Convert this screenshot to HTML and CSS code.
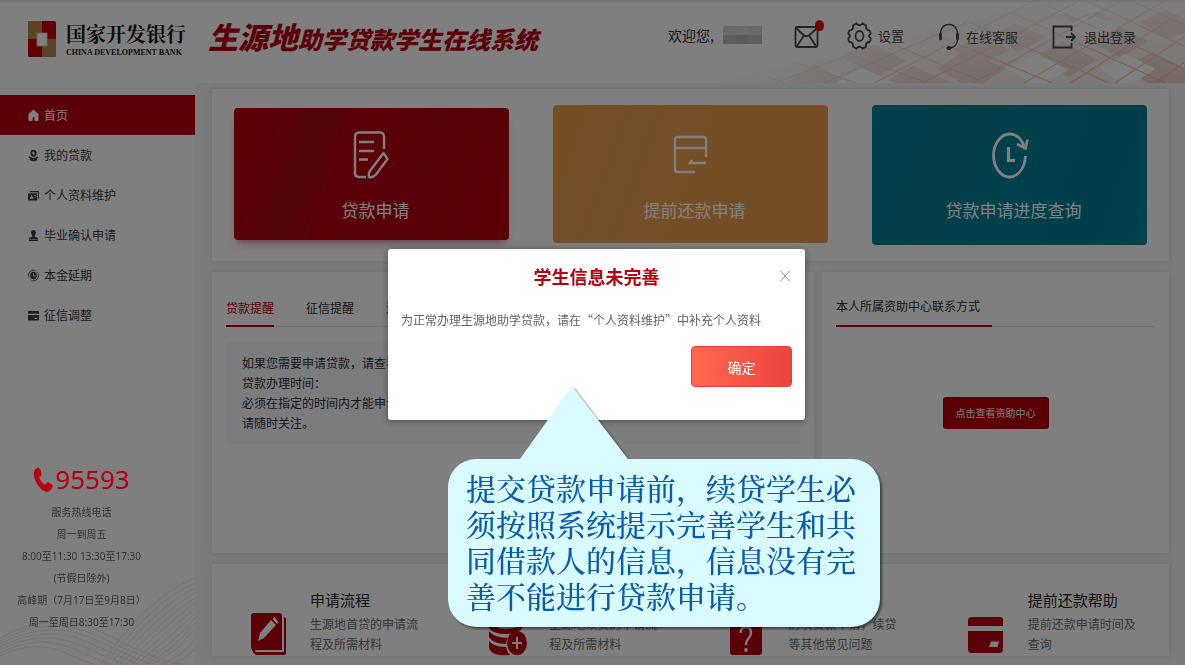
FILE: index.html
```html
<!DOCTYPE html>
<html lang="zh-CN">
<head>
<meta charset="utf-8">
<meta name="viewport" content="width=device-width, initial-scale=1">
<title>生源地助学贷款学生在线系统</title>
<link rel="stylesheet" href="styles.css">
</head>
<body>
<div class="page">
  <header class="header">
    <svg class="header-art" viewBox="0 0 465 80" preserveAspectRatio="xMaxYMid slice" aria-hidden="true">
      <defs>
        <linearGradient id="fade" x1="0" y1="0.4" x2="1" y2="0.6"><stop offset="0.05" stop-color="#000"/><stop offset="0.4" stop-color="#999"/><stop offset="1" stop-color="#fff"/></linearGradient>
        <linearGradient id="fadeDown" x1="0" y1="0" x2="0" y2="1"><stop offset="0" stop-color="#fff" stop-opacity="0.6"/><stop offset="1" stop-color="#fff" stop-opacity="0"/></linearGradient>
        <mask id="artMask"><rect width="465" height="80" fill="url(#fade)"/></mask>
      </defs>
      <g mask="url(#artMask)">
        <path d="M0 80L100 58L210 30L330 0H465V80Z" fill="#fbeeea"/>
        <g fill="#f0d0c7">
          <path d="M70 80l30-19 32 19zM130 56l28-14 32 16-30 16zM220 66l30-20 38 20-22 14h-22zM272 33l26-12 30 14-28 14zM316 56l28-17 34 18-28 17zM340 13l24-9 30 12-26 11zM370 38l27-15 32 16-28 16zM404 66l28-17 33 18v13h-36zM420 20l26-12 19 8v14l-18 6zM168 80l28-17 38 17zM236 47l28-14 28 14-28 15z"/>
        </g>
        <g fill="#fff"><path d="M120 80l26-15 32 15zM290 66l28-15 32 16-22 13h-16zM346 24l26-12 30 13-28 13zM380 66l26-15 30 15-22 14h-12zM330 8l22-8h10l20 8-24 8z"/></g>
        <g stroke="#eeb3a3" stroke-width="1" fill="none">
          <path d="M40 70l30 10M80 60l60 20M130 50l80 30M172 40l96 40M212 30l122 50M252 20l138 60M292 10l154 70M330 4l135 62M366 -2l99 46M402 -6l63 29"/>
          <path d="M60 80L150 46M108 80L250 20M158 80L325 -6M206 80L370 -6M256 80L410 -6M306 80L450 -4M352 80L465 8M396 80L465 34M436 80L465 59"/>
        </g>
      </g>
      <rect width="465" height="80" fill="url(#fadeDown)"/>
    </svg>
    <div class="brand">
      <svg class="brand-mark" viewBox="0 0 28 36" aria-hidden="true"><rect width="28" height="36" rx="2" fill="#c00008"/><path d="M2 0H14V18H0V2Q0 0 2 0ZM14 18H28V34Q28 36 26 36H14Z" fill="#b5894a"/><path d="M9 12H19V25H9Z" fill="#fff" stroke="#e2bcae" stroke-width="1"/></svg>
      <div class="brand-name"><span class="brand-cn">国家开发银行</span><span class="brand-en">CHINA DEVELOPMENT BANK</span></div>
    </div>
    <h1 class="site-title"><span class="site-title-lead">生源地</span>助学贷款学生在线系统</h1>
    <div class="tools">
      <p class="welcome">欢迎您,<span class="name-mask"><i></i><i></i><i></i><i></i><i></i><i></i></span></p>
      <a class="tool mail" href="#" aria-label="消息">
        <svg width="26" height="24" viewBox="0 0 26 24" fill="none" stroke="currentColor" stroke-width="1.8"><rect x="1.5" y="2" width="22" height="20" rx="1.5"/><path d="M2.500 3.500l7 6.500q3 2.500 6 0l7-6.500M3 21l7-10.500M22 21l-7-10.500"/></svg>
        <span class="dot"></span>
      </a>
      <a class="tool settings" href="#"><svg width="25" height="28" viewBox="0 0 25 28" fill="none" stroke="currentColor" stroke-width="1.8"><path d="M9.500 1.500Q12.500 5 15.500 1.500L19 3.500Q18.500 8 22.500 8.500Q24 11 23.500 12Q20.500 14 23.500 16Q24 18 22.500 20Q18.500 20 19 24.500L15.500 26.500Q12.500 23 9.500 26.500L6 24.500Q6.500 20 2.500 20Q1 18 1.500 16Q4.500 14 1.500 12Q1 11 2.500 8.500Q6.500 8 6 3.500Z"/><ellipse cx="12.500" cy="14" rx="4" ry="5"/></svg>设置</a>
      <a class="tool service" href="#"><svg width="22" height="28" viewBox="0 0 22 28" fill="none" stroke="currentColor" stroke-width="1.3"><path d="M2.500 10C3 5 6 1.500 11 1.500S19 5 19.500 10M19.500 17Q19 24 12 25"/><path d="M2.500 11v5M19.500 11v5" stroke-width="2.800" stroke-linecap="round"/><ellipse cx="11" cy="25" rx="2" ry="1.300" fill="currentColor"/></svg>在线客服</a>
      <a class="tool logout" href="#"><svg width="24" height="24" viewBox="0 0 24 24" fill="none" stroke="currentColor" stroke-width="1.800"><path d="M19.500 6V1.500H1.500V22.500H19.500V18M14 12H22.500M19 8l4 4-4 4"/></svg>退出登录</a>
    </div>
  </header>

  <div class="body">
    <aside class="sidebar">
      <nav class="menu">
        <a class="menu-item is-active" href="#"><svg viewBox="0 0 12 13" fill="currentColor"><path d="M6 0.500L11 5V12H7.500V8.500Q6 7 4.500 8.500V12H1V5Z" stroke="currentColor" stroke-width="1" stroke-linejoin="round"/></svg>首页</a>
        <a class="menu-item" href="#"><svg viewBox="0 0 12 13" fill="none" stroke="currentColor"><ellipse cx="6" cy="4" rx="2.300" ry="2.800" stroke-width="2"/><path d="M1 8q5 4 10 0M2 10.500q4 3 8 0" stroke-width="1.600"/></svg>我的贷款</a>
        <a class="menu-item" href="#"><svg viewBox="0 0 12 13"><path d="M2 1.500H12V10H11V3H2Z" fill="currentColor"/><rect y="4" width="10" height="8" rx="1" fill="currentColor"/><path d="M2 10q0-2 1.500-2.200V6h1v1.800Q6 8 6 10ZM7 6h1.500v1H7zM7 8h1.500v1H7z" fill="#fff"/></svg>个人资料维护</a>
        <a class="menu-item" href="#"><svg viewBox="0 0 12 13" fill="currentColor"><ellipse cx="6" cy="3.500" rx="2.600" ry="3"/><path d="M4.500 5h3v3q3.500 0 3.500 2.500H1Q1 8 4.500 8zM1 11h10v1.500H1z"/></svg>毕业确认申请</a>
        <a class="menu-item" href="#"><svg viewBox="0 0 12 13" fill="none" stroke="currentColor"><ellipse cx="6" cy="6.500" rx="5.400" ry="5.800" stroke-dasharray="11 1 1 1 1 1" stroke-width="1"/><ellipse cx="6" cy="6.500" rx="3.600" ry="4" fill="currentColor" stroke="none"/><path d="M6 4v3h2" stroke="#fff"/></svg>本金延期</a>
        <a class="menu-item" href="#"><svg viewBox="0 0 12 13"><path d="M1 1.500h10q1 0 1 1V4.500H0V2.500q0-1 1-1zM0 6h12v5q0 1-1 1H1q-1 0-1-1z" fill="currentColor"/><path d="M7 9h3v1.300H7z" fill="#fff"/></svg>征信调整</a>
      </nav>
      <section class="hotline">
        <p class="hotline-number"><svg width="20" height="27" viewBox="0 0 20 27" fill="currentColor"><path d="M1 6Q2 2 5 1.500Q6.500 1.500 7.500 4L8.500 8Q9 9.500 6 11.500Q8 16.500 12 19Q14 16 15 16L19 18.500Q20.500 20 19 22Q17 26 13.500 26Q7 24 3 16Q0 10 1 6Z"/></svg>95593</p>
        <p>服务热线电话</p>
        <p>周一到周五</p>
        <p>8:00至11:30 13:30至17:30</p>
        <p>(节假日除外)</p>
        <p>高峰期（7月17日至9月8日）</p>
        <p>周一至周日8:30至17:30</p>
      </section>
      <svg class="waves" viewBox="0 0 195 90" preserveAspectRatio="none" fill="none" stroke="#e3b9c2" stroke-width="0.700" aria-hidden="true">
        <path d="M0 66Q50 38 100 62T170 90M0 69Q50 43 96 65T155 90M0 72Q45 48 90 68T140 90M0 75Q42 53 82 71T126 90M0 78Q38 58 74 74T112 90M0 81Q34 64 66 78T98 90M0 63Q55 32 108 60T186 90"/>
        <path d="M100 90Q150 20 195 3M105 90Q153 26 195 8M110 90Q156 32 195 13M115 90Q159 38 195 18M120 90Q162 44 195 23M125 90Q165 50 195 28M130 90Q168 56 195 33M135 90Q171 62 195 38M140 90Q174 68 195 43M145 90Q177 72 195 48M150 90Q180 76 195 53M160 90Q184 80 195 64M170 90Q186 84 195 74"/>
      </svg>
    </aside>

    <main class="main">
      <section class="card tiles">
        <button class="tile tile-red" type="button">
          <svg width="40" height="48" viewBox="0 0 40 48" fill="none" stroke="currentColor" stroke-width="2.400"><path d="M32 18V6Q32 1.500 28 1.500H7Q3 1.500 3 6V42Q3 46 7 46H14M7 11H22M7 20H22M7 28.500H16"/><path d="M31.500 22L35.500 28L24 43.500Q21 47 17 46Q16 42 19 38.500Z" stroke-linejoin="round"/></svg>
          <span class="tile-label">贷款申请</span>
        </button>
        <button class="tile tile-gold" type="button">
          <svg width="40" height="48" viewBox="0 0 40 48" fill="none" stroke="currentColor" stroke-width="2.400"><path d="M35 26V8.500Q35 6 32.500 6H6.500Q4 6 4 8.500V38Q4 41 6.500 41H24M4 17H35M35 32H19L21 29"/></svg>
          <span class="tile-label">提前还款申请</span>
        </button>
        <button class="tile tile-teal" type="button">
          <svg width="40" height="48" viewBox="0 0 40 48" fill="none" stroke="currentColor" stroke-width="2.800"><path d="M35.500 25C35 37 28 46 19.500 46S3.500 36 3.500 24.500S11 3 19.500 3C26 3 31 7 34 15"/><path d="M27 13L35.500 17.500L37.500 8.500"/><path d="M18.500 16V29.500H25" stroke-width="3.200"/></svg>
          <span class="tile-label">贷款申请进度查询</span>
        </button>
      </section>

      <div class="row">
        <section class="card reminders">
          <div class="tabs" role="tablist">
            <button class="tab is-active" type="button" role="tab" aria-selected="true">贷款提醒</button>
            <button class="tab" type="button" role="tab" aria-selected="false">征信提醒</button>
            <button class="tab" type="button" role="tab" aria-selected="false">还</button>
          </div>
          <div class="notice">
            <p>如果您需要申请贷款，请查看</p>
            <p>贷款办理时间：</p>
            <p>必须在指定的时间内才能申请</p>
            <p>请随时关注。</p>
          </div>
        </section>
        <section class="card contact">
          <h2 class="contact-title"><span>本人所属资助中心联系方式</span></h2>
          <button class="contact-button" type="button">点击查看资助中心</button>
        </section>
      </div>

      <section class="card guides">
        <a class="guide" href="#">
          <svg width="38" height="44" viewBox="0 0 38 44"><path d="M4 1H29Q32 1 32 4V38H7Q5 38 5 40H34V5Q36 5 36 8V41Q36 43 34 43H7Q3 42 2 38L1 35V4Q1 1 4 1Z" fill="#b7000f"/><path d="M8 29L10 21L21 8L26 13L14 26ZM22.500 7L24.500 5L28.500 10L27 12Z" fill="#fff"/></svg>
          <span class="guide-text"><strong>申请流程</strong>生源地首贷的申请流程及所需材料</span>
        </a>
        <a class="guide" href="#">
          <svg width="38" height="44" viewBox="0 0 38 44"><g fill="#b7000f"><ellipse cx="17" cy="6" rx="16" ry="6"/><path d="M0 10Q5 17 17 17T34 10V15Q30 22 17 22T0 16ZM0 19Q5 26 19 26Q17 29 17 32Q4 32 0 25ZM0 29Q5 35 17 35Q18 40 21 43Q2 45 0 35Z"/><ellipse cx="28" cy="31" rx="10" ry="12"/></g><path d="M28 25V37M23 31H33" stroke="#fff" stroke-width="2"/></svg>
          <span class="guide-text">生源地续贷的申请流程及所需材料</span>
        </a>
        <a class="guide" href="#">
          <svg width="38" height="44" viewBox="0 0 38 44"><rect x="1" y="2" width="32" height="41" rx="3" fill="#b7000f"/><path d="M11.500 21Q12 15 17 15T22 21Q22 24 19 27Q17 29 17 33" fill="none" stroke="#fff" stroke-width="2.400"/><circle cx="17" cy="38" r="1.900" fill="#fff"/></svg>
          <span class="guide-text">历次贷款申请，续贷等其他常见问题</span>
        </a>
        <a class="guide" href="#">
          <svg width="38" height="44" viewBox="0 0 38 44"><path d="M4 5H32Q35 5 35 8V14H0V8Q0 5 4 5ZM0 19H35V37Q35 41 32 41H4Q0 41 0 37Z" fill="#b7000f"/><path d="M23 29.500H31L29.500 35H21Z" fill="#fff"/></svg>
          <span class="guide-text"><strong>提前还款帮助</strong>提前还款申请时间及查询</span>
        </a>
      </section>
    </main>
  </div>
</div>

<div class="overlay">
  <section class="dialog" role="dialog" aria-modal="true" aria-labelledby="dialog-title">
    <h2 class="dialog-title" id="dialog-title">学生信息未完善</h2>
    <button class="dialog-close" type="button" aria-label="关闭"><svg width="10" height="12" viewBox="0 0 10 12" stroke="currentColor" fill="none"><path d="M0.500 1L9.500 11M9.500 1L0.500 11"/></svg></button>
    <p class="dialog-text">为正常办理生源地助学贷款，请在“个人资料维护”中补充个人资料</p>
    <button class="dialog-ok" type="button">确定</button>
  </section>
</div>

<div class="callout">
  <svg class="callout-tail" viewBox="0 0 108 76" aria-hidden="true"><path d="M0 76V74L52 1L108 74V76Z" fill="#d9fbff"/></svg>
  <p>提交贷款申请前，续贷学生必须按照系统提示完善学生和共同借款人的信息，信息没有完善不能进行贷款申请。</p>
</div>
</body>
</html>
```

FILE: styles.css
```css
* { box-sizing: border-box; }
html, body { margin: 0; height: 100%; }
body {
  font-family: "Noto Sans CJK SC", "Noto Sans", sans-serif;
  font-size: 12px;
  line-height: 20px;
  color: #303336;
  background: #f4f7f6;
  overflow: hidden;
}
p, h1, h2 { margin: 0; }
a { color: inherit; text-decoration: none; }
button { font: inherit; color: inherit; border: 0; background: none; padding: 0; cursor: pointer; }
svg { display: block; flex: none; }

.page { display: flex; flex-direction: column; min-height: 100vh; }

/* Header */
.header {
  position: relative;
  display: flex;
  align-items: flex-start;
  height: 83px;
  padding: 0 49px 0 28px;
  background: #fff;
  border-top: 2px solid #ececec;
}
.header-art { position: absolute; right: 0; top: 0; width: 465px; height: 100%; }
.brand { display: flex; gap: 10px; padding: 19px 11px 0 0; }
.brand-mark { width: 28px; height: 36px; }
.brand-name { display: flex; flex-direction: column; color: #1c1618; white-space: nowrap; }
.brand-cn { font: 700 20px/26px "Noto Serif CJK SC", "Noto Sans CJK SC", serif; }
.brand-en { font: 700 8px/12px "Liberation Serif", serif; }
.site-title {
  margin-top: 14px;
  padding-left: 11px;
  font-size: 24px;
  line-height: 40px;
  font-weight: 900;
  font-style: italic;
  color: #b7000f;
  white-space: nowrap;
}
.site-title-lead { font-size: 30px; }
.tools { position: relative; display: flex; margin-left: auto; font-size: 13px; white-space: nowrap; }
.welcome { display: flex; align-items: center; font-size: 14px; height: 66px; padding-right: 32px; }
.name-mask { display: grid; grid-template-columns: repeat(3, 13px); margin-left: 9px; }
.name-mask i { height: 9px; background: #d2d2d2; }
.name-mask i:nth-child(2) { background: #dadada; }
.name-mask i:nth-child(n+4) { background: #bdbdbd; }
.name-mask i:nth-child(5) { background: #b4b4b4; }
.tool { display: flex; align-items: center; height: 70px; gap: 6px; color: #43484d; }
.mail { position: relative; margin-right: 27px; }
.dot { position: absolute; right: -4px; top: 18px; width: 9px; height: 11px; border-radius: 50%; background: #e60000; }
.settings { margin-right: 34px; height: 68px; }
.service { margin-right: 34px; }
.logout { gap: 8px; }

/* Sidebar */
.body { flex: 1; display: flex; }
.sidebar { position: relative; width: 195px; flex: none; background: #fff; padding-top: 12px; display: flex; flex-direction: column; }
.menu { display: flex; flex-direction: column; }
.menu-item { display: flex; align-items: center; gap: 5px; height: 40px; padding-left: 28px; color: #3d4043; }
.menu-item svg { width: 11px; height: 13px; }
.menu-item.is-active { background: #b7000f; color: #fff; }
.hotline {
  position: relative;
  z-index: 1;
  display: flex;
  flex-direction: column;
  align-items: center;
  margin-top: auto;
  padding: 0 32px 32px 0;
  font-family: "Noto Sans", "Noto Sans CJK SC", sans-serif;
  font-size: 10px;
  line-height: 22px;
  white-space: nowrap;
}
.hotline-number { display: flex; align-items: center; gap: 2px; color: #b7000f; font-size: 26px; line-height: 44px; }
.waves { position: absolute; left: 0; bottom: 0; width: 100%; height: 90px; opacity: 0.6; }

/* Content */
.main { flex: 1; min-width: 0; display: flex; flex-direction: column; gap: 11px; padding: 6px 16px 9px 17px; }
.card { background: #fff; box-shadow: 0 0 6px rgba(0, 30, 25, 0.1); }
.tiles { display: grid; grid-template-columns: repeat(3, 1fr); gap: 44px; align-items: start; padding: 16px 22px; }
.tile { display: flex; flex-direction: column; align-items: center; gap: 18px; padding-top: 26px; border-radius: 4px; color: #fff; font-size: 17px; line-height: 26px; height: 140px; }
.tile-label { padding-left: 8px; }
.tile-red { height: 132px; margin-top: 3px; padding-top: 23px; background: linear-gradient(110deg, #b7000f 10%, #a60b17 28%, #b7000f 42%, #ad0712 65%, #b9000f); box-shadow: 0 7px 8px -4px rgba(183, 0, 15, 0.5); }
.tile-gold { height: 138px; background: linear-gradient(110deg, #ee9c49, #e6a053 28%, #ec9d4b 55%, #ec9a48); }
.tile-teal { background: linear-gradient(110deg, #008299, #0a7b90 28%, #048299 55%, #007c92 75%, #00859b); }
.row { flex: 1; display: grid; grid-template-columns: 602px 1fr; gap: 8px; }
.reminders { padding: 24px 14px; }
.tabs { display: flex; gap: 32px; border-bottom: 1px solid #dedfe3; }
.tab { height: 31px; padding-bottom: 6px; margin-bottom: -1px; border-bottom: 2px solid transparent; }
.tab.is-active { color: #b7000f; border-color: #b7000f; }
.notice { margin-top: 15px; padding: 11px 16px; background: #f6f9fc; white-space: nowrap; overflow: hidden; }
.contact { padding: 24px 14px; text-align: center; }
.contact-title { border-bottom: 1px solid #dedfe3; display: flex; font-size: 12px; line-height: 20px; font-weight: 400; }
.contact-title span { height: 31px; margin-bottom: -1px; padding-right: 12px; border-bottom: 2px solid #b7000f; }
.contact-button { margin-top: 70px; height: 32px; padding: 0 13px; border-radius: 3px; background: #b7000f; color: #fff; font-size: 10px; }
.guides { display: grid; grid-template-columns: repeat(4, 1fr); padding-top: 22px; }
.guide { display: flex; align-items: flex-end; gap: 22px; padding-left: 38px; color: #6c6e70; }
.guide-text { width: 112px; padding-bottom: 2px; }
.guide-text strong { display: block; font-size: 15px; line-height: 28px; font-weight: 400; color: #26292c; }

/* Dialog */
.overlay { position: fixed; inset: 0; padding: 249px 0 0 8px; background: rgba(0, 0, 0, 0.5); }
.dialog { position: relative; width: 417px; max-width: 90%; margin: 0 auto; padding: 13px 13px 33px; background: #fff; border-radius: 3px; box-shadow: 0 1px 6px rgba(0, 0, 0, 0.4); display: flex; flex-direction: column; }
.dialog-title { color: #b7000f; font-size: 18px; line-height: 28px; font-weight: 700; text-align: center; }
.dialog-close { position: absolute; right: 15px; top: 21px; color: #909399; }
.dialog-text { margin-top: 20px; line-height: 20px; color: #606266; }
.dialog-ok { align-self: flex-end; margin-top: 16px; width: 101px; height: 41px; border: 1px solid #f33c37; border-radius: 4px; background: linear-gradient(90deg, #ff6850, #ee443e); color: #fff; font-size: 14px; }

/* Callout */
.callout { position: absolute; left: 448px; top: 459px; width: 432px; padding: 10px 18px 14px; border-radius: 28px; background: #d9fbff; color: #0a5cab; font: 500 30px/36px "Noto Serif CJK SC", "Noto Sans CJK SC", serif; filter: drop-shadow(2px 2px 1px rgba(0, 0, 0, 0.5)); }
.callout-tail { position: absolute; left: 72px; top: -74px; width: 108px; height: 76px; }
```
